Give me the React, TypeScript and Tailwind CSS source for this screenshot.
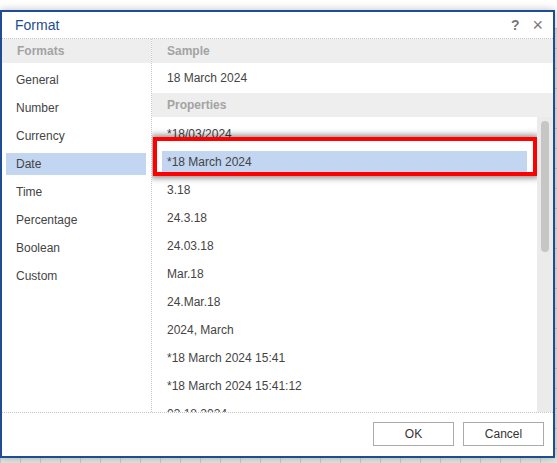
import React from 'react'

// ─── Data ────────────────────────────────────────────────────────────────────
const FORMATS = ['General', 'Number', 'Currency', 'Date', 'Time', 'Percentage', 'Boolean', 'Custom']

const PROPERTIES = [
  '*18/03/2024',
  '*18 March 2024',
  '3.18',
  '24.3.18',
  '24.03.18',
  'Mar.18',
  '24.Mar.18',
  '2024, March',
  '*18 March 2024 15:41',
  '*18 March 2024 15:41:12',
  '03.18.2024',
]

// ─── Section header (gray strip) ─────────────────────────────────────────────
function SectionHeader({ label }: { label: string }) {
  return (
    <div className="h-[24px] flex items-center pl-[15px] bg-[#eeeeee] text-[12px] font-bold text-[#a3a3a3]">
      {label}
    </div>
  )
}

// each row is 28px tall, the highlight band 22px inside it
function Row({ label, selected, offset }: { label: string; selected?: boolean; offset: string }) {
  return (
    <div className="h-[28px] py-[3px] shrink-0">
      <div
        className={`h-[22px] flex items-center text-[12px] text-[#444] whitespace-nowrap ${offset} ${
          selected ? 'bg-[#c2d5f1]' : ''
        }`}
      >
        {label}
      </div>
    </div>
  )
}

// ─── Main ────────────────────────────────────────────────────────────────────
export default function App() {
  const activeFormat = 'Date'
  const activeProp = 1

  return (
    <div className="relative w-[557px] h-[463px] overflow-hidden bg-white font-['Liberation_Sans',Arial,sans-serif]">
      {/* spreadsheet canvas behind the dialog */}
      <div className="absolute left-0 right-0 top-[28px] bottom-0 bg-[#dfe7df] bg-[linear-gradient(to_right,#c3cdc3_1px,transparent_1px),linear-gradient(to_bottom,#c3cdc3_1px,transparent_1px)] bg-[size:20px_20px]" />

      {/* dialog */}
      <div className="relative mt-[10px] w-[555px] h-[448px] border-2 border-[#1f4c94] bg-white shadow-[0_0_8px_rgba(0,0,0,0.25)] flex flex-col">
        {/* title bar */}
        <div className="h-[27px] flex items-center pl-[13px] pr-[10px] border-b border-dotted border-[#c4c4c4]">
          <span className="text-[14px] text-[#1f4c8f]">Format</span>
          <span className="ml-auto text-[14px] font-bold text-[#777]">?</span>
          <span className="ml-[13px] text-[18px] leading-none text-[#777]">×</span>
        </div>

        {/* body */}
        <div className="h-[373px] flex">
          {/* left: formats */}
          <div className="w-[150px] border-r border-dotted border-[#c4c4c4] flex flex-col">
            <SectionHeader label="Formats" />
            <div className="pt-[3px] pl-[4px] pr-[5px] flex flex-col">
              {FORMATS.map(f => (
                <Row key={f} label={f} selected={f === activeFormat} offset="pl-[10px]" />
              ))}
            </div>
          </div>

          {/* right: sample + properties */}
          <div className="flex-1 flex flex-col min-w-0">
            <SectionHeader label="Sample" />
            <div className="h-[30px] flex items-center pl-[15px] text-[12px] text-[#444]">18 March 2024</div>
            <SectionHeader label="Properties" />
            <div className="flex-1 flex min-h-0">
              <div className="relative flex-1 overflow-hidden pt-[3px] px-[10px] flex flex-col">
                {PROPERTIES.map((p, i) => (
                  <Row key={p} label={p} selected={i === activeProp} offset="pl-[5px]" />
                ))}
                {/* red highlight box drawn over the selected row */}
                <div className="absolute left-[1px] top-[20px] w-[384px] h-[39px] border-4 border-[#ff0000] shadow-[0_0_6px_2px_rgba(0,0,0,0.45)]" />
              </div>
              {/* scrollbar */}
              <div className="w-[16px] bg-[#ebebeb] pt-[4px] flex justify-center">
                <div className="w-[8px] h-[131px] rounded-full bg-[#c6c6c6]" />
              </div>
            </div>
          </div>
        </div>

        {/* footer */}
        <div className="flex-1 border-t border-dotted border-[#c4c4c4] flex justify-end items-start pt-[9px] pr-[9px] gap-[9px]">
          <button className="w-[81px] h-[24px] border border-[#ababab] bg-white text-[12px] text-[#333]">OK</button>
          <button className="w-[81px] h-[24px] border border-[#ababab] bg-white text-[12px] text-[#333]">Cancel</button>
        </div>
      </div>
    </div>
  )
}
